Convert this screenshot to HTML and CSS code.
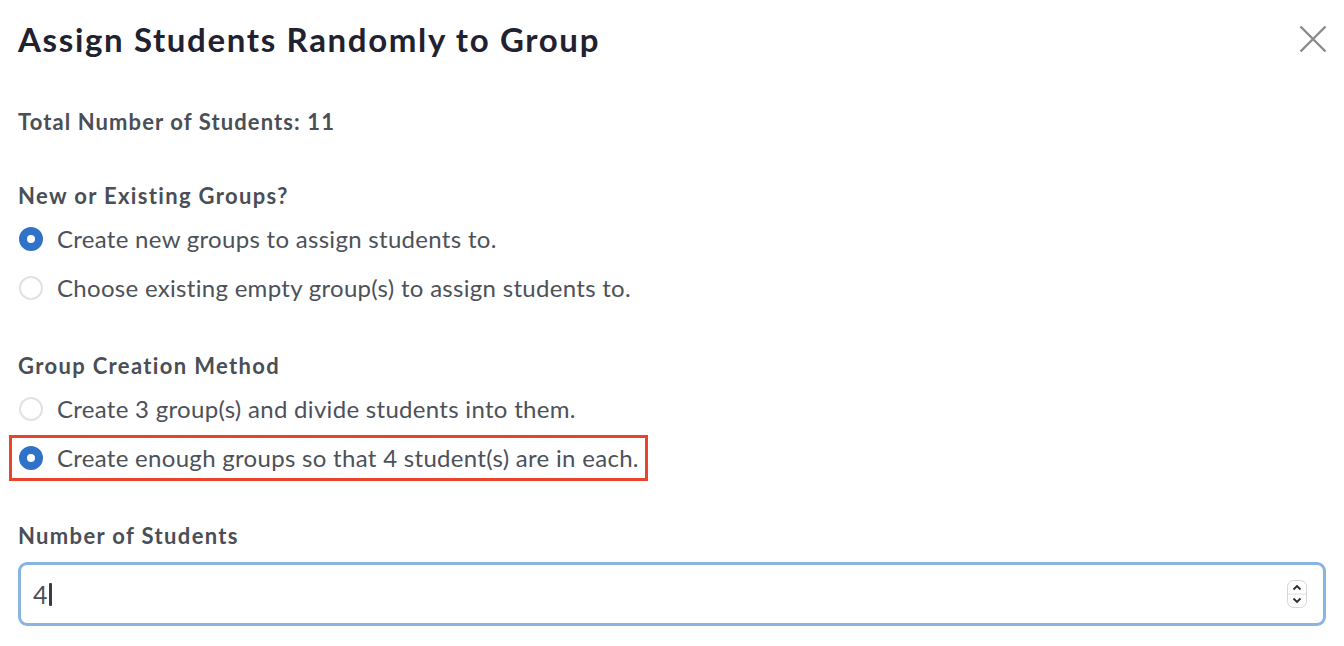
FILE: index.html
```html
<!DOCTYPE html>
<html>
<head>
  <meta charset="UTF-8">
  <title>Assign Students Randomly to Group</title>
  <link rel="stylesheet" href="styles.css">
</head>
<body>
  <div class="modal">
    <div class="modal-header">
      <h1>Assign Students Randomly to Group</h1>
      <button class="close" aria-label="Close">
        <svg width="28" height="28" viewBox="0 0 28 28">
          <path d="M1.5 1.5 L26.5 26.5 M26.5 1.5 L1.5 26.5" stroke="#8a8a8a" stroke-width="2.4" fill="none"/>
        </svg>
      </button>
    </div>

    <p class="total">Total Number of Students: 11</p>

    <div class="group">
      <div class="group-label">New or Existing Groups?</div>
      <div class="options">
        <label class="option"><span class="radio checked"></span>Create new groups to assign students to.</label>
        <label class="option"><span class="radio"></span>Choose existing empty group(s) to assign students to.</label>
      </div>
    </div>

    <div class="group">
      <div class="group-label">Group Creation Method</div>
      <div class="options">
        <label class="option"><span class="radio"></span>Create 3 group(s) and divide students into them.</label>
        <label class="option highlighted"><span class="radio checked"></span>Create enough groups so that 4 student(s) are in each.</label>
      </div>
    </div>

    <div class="group">
      <div class="group-label field-label">Number of Students</div>
      <div class="field">
        <span class="value">4</span><span class="caret"></span>
        <span class="spinner">
          <svg width="20" height="28" viewBox="0 0 20 28">
            <rect x="0.5" y="0.5" width="19" height="27" rx="6" fill="#fff" stroke="#d6d6d6"/>
            <line x1="1" y1="14" x2="19" y2="14" stroke="#dcdcdc"/>
            <path d="M6.5 9.5 L10 6 L13.5 9.5" stroke="#2b2b2b" stroke-width="1.8" fill="none"/>
            <path d="M6.5 18.5 L10 22 L13.5 18.5" stroke="#2b2b2b" stroke-width="1.8" fill="none"/>
          </svg>
        </span>
      </div>
    </div>
  </div>
</body>
</html>
```

FILE: styles.css
```css
/* Page */
body {
  margin: 0;
  padding: 0;
  background-color: #fff;
  font-family: Lato, "Open Sans", Arial, sans-serif;
  color: #4a4e56;
}

.modal {
  padding: 19px 18px 0 18px;
}

/* Header */
.modal-header {
  display: flex;
  justify-content: space-between;
  align-items: center;
}

h1 {
  margin: 0;
  font-size: 33px;
  line-height: 40px;
  font-weight: 700;
  color: #21212f;
  letter-spacing: 1.65px;
}

.close {
  background: none;
  border: none;
  padding: 0;
  margin-right: -1px;
  cursor: pointer;
  display: flex;
}

/* Sections */
.total {
  margin: 49px 0 0 0;
  font-size: 22px;
  line-height: 28px;
  font-weight: 700;
  letter-spacing: 1.1px;
}

.group {
  margin-top: 46px;
}

.group + .group {
  margin-top: 50px;
}

.group-label {
  font-size: 22px;
  line-height: 28px;
  font-weight: 700;
  letter-spacing: 1.35px;
}

.options {
  display: flex;
  flex-direction: column;
  align-items: flex-start;
  gap: 21px;
  margin-top: 15px;
}

.option {
  display: flex;
  align-items: center;
  height: 28px;
  font-size: 24px;
  line-height: 28px;
  color: #4d5159;
  letter-spacing: 0.3px;
  cursor: pointer;
}

.option.highlighted {
  outline: 3px solid #e8442c;
  outline-offset: 6px;
}

/* Radios */
.radio {
  box-sizing: border-box;
  width: 24px;
  height: 24px;
  border-radius: 50%;
  border: 2px solid #e1e2e4;
  background-color: #fff;
  margin: 0 14px 0 1px;
  flex-shrink: 0;
}

.radio.checked {
  border: 8px solid #3172c9;
  background-color: #fff;
}

/* Number field */
.field-label {
  margin-bottom: 12px;
}

.field {
  display: flex;
  align-items: center;
  height: 64px;
  box-sizing: border-box;
  border: 3px solid #8ab4e0;
  border-radius: 9px;
  padding: 0 16px 0 12px;
  font-size: 25px;
  color: #4a4e56;
}

.caret {
  width: 3px;
  height: 23px;
  background-color: #3a3d44;
  margin-left: 1px;
  border-radius: 1px;
}

.spinner {
  margin-left: auto;
  display: flex;
}
```
